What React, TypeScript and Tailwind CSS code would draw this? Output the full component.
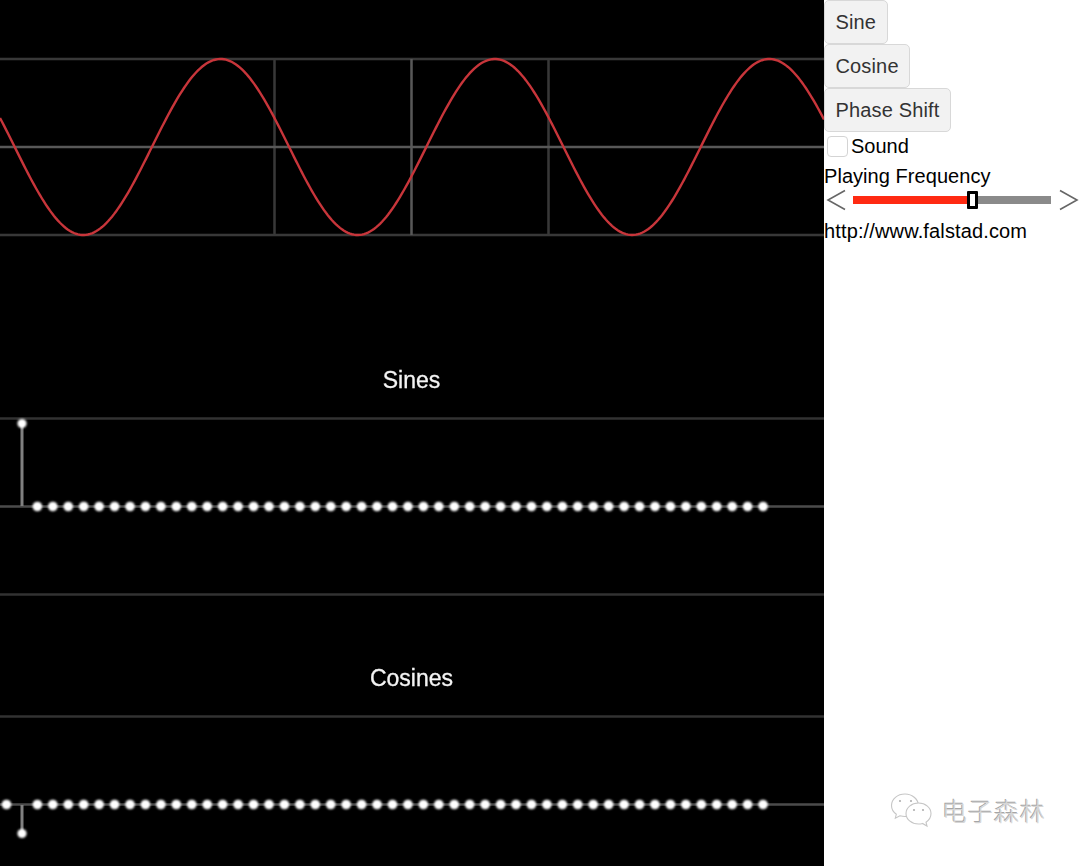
import React from "react";

const wavePoints = (() => {
  const pts: string[] = [];
  for (let x = 0; x <= 824; x += 2) {
    const y = 147 - 88 * Math.cos(((x - 220.5) * 2 * Math.PI) / 274.4);
    pts.push(`${x},${y.toFixed(2)}`);
  }
  return pts.join(" ");
})();

const dotX = (i: number) => 6.5 + 15.44 * i;
const indices = Array.from({ length: 48 }, (_, i) => i + 2);

function Canvas() {
  return (
    <svg width="824" height="866" viewBox="0 0 824 866" className="block shrink-0 bg-black">
      <defs>
        <filter id="soft" x="0" y="0" width="824" height="866" filterUnits="userSpaceOnUse">
          <feGaussianBlur stdDeviation="0.8" />
        </filter>
        <filter id="softline" x="0" y="0" width="824" height="866" filterUnits="userSpaceOnUse">
          <feGaussianBlur stdDeviation="0.5" />
        </filter>
      </defs>
      <g filter="url(#softline)">
        <g stroke="#383838" strokeWidth="2.5">
          <line x1="0" x2="824" y1="59" y2="59" />
          <line x1="0" x2="824" y1="235" y2="235" />
          <line x1="274.5" x2="274.5" y1="59" y2="235" />
          <line x1="548.5" x2="548.5" y1="59" y2="235" />
        </g>
        <line x1="0" x2="824" y1="147" y2="147" stroke="#585858" strokeWidth="2.5" />
        <line x1="411.5" x2="411.5" y1="59" y2="235" stroke="#585858" strokeWidth="2.5" />
        <polyline points={wavePoints} fill="none" stroke="#c8363a" strokeWidth="2.4" />

        <text x="411.5" y="387.500" textAnchor="middle" fill="#f4f4f4" stroke="#f4f4f4" strokeWidth="0.3" fontSize="23" fontFamily="'Liberation Sans', Arial, sans-serif">
          Sines
        </text>
        <line x1="0" x2="824" y1="418.5" y2="418.5" stroke="#303030" strokeWidth="2.5" />
        <line x1="0" x2="824" y1="506.5" y2="506.5" stroke="#4c4c4c" strokeWidth="2.5" />
        <line x1="0" x2="824" y1="594.5" y2="594.5" stroke="#303030" strokeWidth="2.5" />
        <line x1="22" x2="22" y1="424" y2="506" stroke="#808080" strokeWidth="3" />

        <text x="411.5" y="685.500" textAnchor="middle" fill="#f4f4f4" stroke="#f4f4f4" strokeWidth="0.3" fontSize="23" fontFamily="'Liberation Sans', Arial, sans-serif">
          Cosines
        </text>
        <line x1="0" x2="824" y1="716.5" y2="716.5" stroke="#303030" strokeWidth="2.5" />
        <line x1="0" x2="824" y1="804.5" y2="804.5" stroke="#4c4c4c" strokeWidth="2.5" />
        <line x1="22" x2="22" y1="805" y2="833" stroke="#808080" strokeWidth="3" />
      </g>
      <g fill="#ffffff" filter="url(#soft)">
        <circle cx="22" cy="423.5" r="4.6" />
        {indices.map((i) => (
          <circle key={i} cx={dotX(i)} cy="506.5" r="4.8" />
        ))}
        <circle cx="6.5" cy="804.5" r="4.8" />
        <circle cx="22" cy="833.5" r="4.6" />
        {indices.map((i) => (
          <circle key={i} cx={dotX(i)} cy="804.5" r="4.8" />
        ))}
      </g>
    </svg>
  );
}

function Btn({ label }: { label: string }) {
  return (
    <button className="block h-[44px] rounded-[5px] border-[1.5px] border-[#d8d8d8] bg-[#f2f2f2] px-[10.5px] text-[20px] leading-none tracking-[0.15px] text-[#333333]">
      {label}
    </button>
  );
}

function Watermark() {
  return (
    <div className="flex items-center gap-[8px]">
      <svg width="44" height="36" viewBox="0 0 44 36" fill="#ffffff" stroke="#c6c6c6" strokeWidth="1.1">
        <path d="M15 2C7.500 2 1.500 7 1.500 13.500c0 3.600 1.800 6.600 4.800 8.800l-1 3.900 4.600-2.400c1.600.4 3.200.7 5 .7 7.500 0 13.500-5 13.500-11S22.500 2 15 2z" />
        <path d="M28.500 11C21.500 11 16 15.700 16 21.500S21.500 32 28.500 32c1.400 0 2.800-.2 4-.6l4.500 2.600-1-3.800c3-2 5-5.200 5-8.700C41 15.700 35.500 11 28.500 11z" />
        <g fill="#b0b0b0" stroke="none">
          <circle cx="10" cy="9" r="1.100" />
          <circle cx="21" cy="9" r="1.100" />
          <circle cx="24" cy="18" r="1.100" />
          <circle cx="33" cy="18" r="1.100" />
        </g>
      </svg>
      <span className="font-['Noto_Sans_CJK_SC','Liberation_Sans',sans-serif] text-[25px] font-light leading-none tracking-[1px] text-[#d6d6d6] [text-shadow:-1px_-1px_0_#a6a6a6]">
        电子森林
      </span>
    </div>
  );
}

export default function App() {
  return (
    <div className="flex h-[866px] w-[1080px] overflow-hidden bg-white font-['Liberation_Sans',Arial,sans-serif] text-black">
      <Canvas />
      <div className="flex flex-1 flex-col items-start">
        <Btn label="Sine" />
        <Btn label="Cosine" />
        <Btn label="Phase Shift" />
        <label className="mt-[1px] flex h-[26px] items-center text-[20px] leading-none">
          <span className="ml-[3px] mr-[3px] h-[21px] w-[21px] rounded-[4px] border-[1.5px] border-[#d4d4d4] bg-white" />
          Sound
        </label>
        <div className="mt-[5px] text-[20px] leading-[24px] tracking-[0.05px]">Playing Frequency</div>
        <div className="mt-[1px] flex h-[22px] w-full items-center">
          <svg width="22" height="22" viewBox="0 0 22 22" className="ml-[2px] shrink-0" fill="none" stroke="#666666" strokeWidth="1.6">
            <path d="M19 1.500 2 11l17 9.500" />
          </svg>
          <div className="ml-[5px] flex h-[8px] w-[198px] items-center">
            <div className="h-full w-[114px] bg-[#ff2a12]" />
            <div className="z-10 h-[18px] w-[11px] shrink-0 rounded-[1px] border-[3px] border-black bg-white" />
            <div className="h-full flex-1 bg-[#8a8a8a]" />
          </div>
          <svg width="22" height="22" viewBox="0 0 22 22" className="ml-[7px] shrink-0" fill="none" stroke="#666666" strokeWidth="1.6">
            <path d="M2 1.500 19 11 2 20.500" />
          </svg>
        </div>
        <div className="mt-[8px] text-[20px] leading-[24px] tracking-[0.14px]">http://www.falstad.com</div>
        <div className="mt-[549px] ml-[66px]">
          <Watermark />
        </div>
      </div>
    </div>
  );
}
